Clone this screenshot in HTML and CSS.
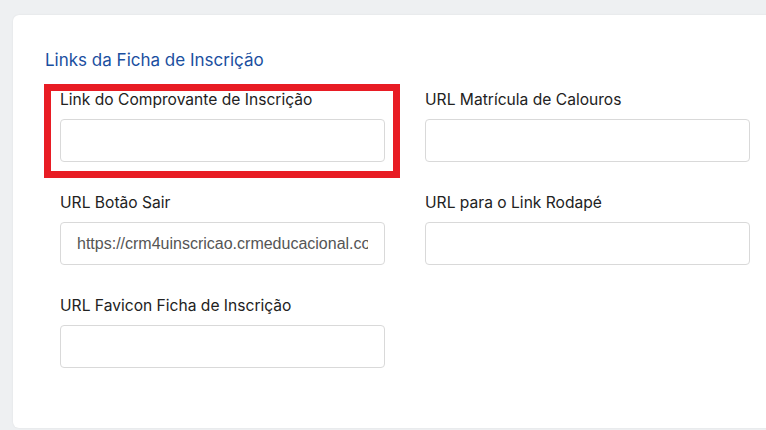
FILE: index.html
```html
<!DOCTYPE html>
<html lang="pt-BR">
<head>
<meta charset="utf-8">
<title>Links da Ficha de Inscrição</title>
<link rel="stylesheet" href="styles.css">
</head>
<body>
<div class="page">
  <section class="card">
    <h2 class="title">Links da Ficha de Inscrição</h2>
    <div class="grid">
      <div class="field highlighted">
        <label class="label">Link do Comprovante de Inscrição</label>
        <input class="input" type="text" value="">
      </div>
      <div class="field">
        <label class="label">URL Matrícula de Calouros</label>
        <input class="input" type="text" value="">
      </div>
      <div class="field">
        <label class="label">URL Botão Sair</label>
        <input class="input" type="text" value="https://crm4uinscricao.crmeducacional.com/">
      </div>
      <div class="field">
        <label class="label">URL para o Link Rodapé</label>
        <input class="input" type="text" value="">
      </div>
      <div class="field">
        <label class="label">URL Favicon Ficha de Inscrição</label>
        <input class="input" type="text" value="">
      </div>
    </div>
  </section>
</div>
</body>
</html>
```
FILE: styles.css
```css
*, *::before, *::after { box-sizing: border-box; }
html, body { margin: 0; padding: 0; }
body {
  background: #eef0f2;
  font-family: Inter, "Noto Sans", sans-serif;
  overflow: hidden;
  width: 766px;
  height: 430px;
}
.page {
  padding: 15px 0 0 13px;
}
.card {
  background: #ffffff;
  width: 800px;
  height: 413px;
  border-radius: 6px;
  box-shadow: 0 0 2px rgba(0,0,0,0.08);
  padding: 35px 0 0 32px;
}
.title {
  margin: 0 0 20px 0;
  font-size: 17px;
  line-height: 20px;
  font-weight: 400;
  color: #1b4f9f;
}
.grid {
  display: grid;
  grid-template-columns: 325px 325px;
  column-gap: 40px;
  row-gap: 31px;
  padding-left: 15px;
}
.field {
  position: relative;
  display: flex;
  flex-direction: column;
}
.highlighted::before {
  content: "";
  position: absolute;
  left: -16px;
  top: -6px;
  width: 356px;
  height: 94px;
  border: 7px solid #e81c24;
  pointer-events: none;
}
.label {
  font-size: 15.6px;
  line-height: 20px;
  color: #222222;
  margin-bottom: 9px;
}
.input {
  width: 325px;
  height: 43px;
  border: 1px solid #d9d9d9;
  border-radius: 4px;
  padding: 0 16px;
  font-family: "Liberation Sans", Arial, sans-serif;
  font-size: 16px;
  color: #555555;
  background: #ffffff;
  outline: none;
}
```
